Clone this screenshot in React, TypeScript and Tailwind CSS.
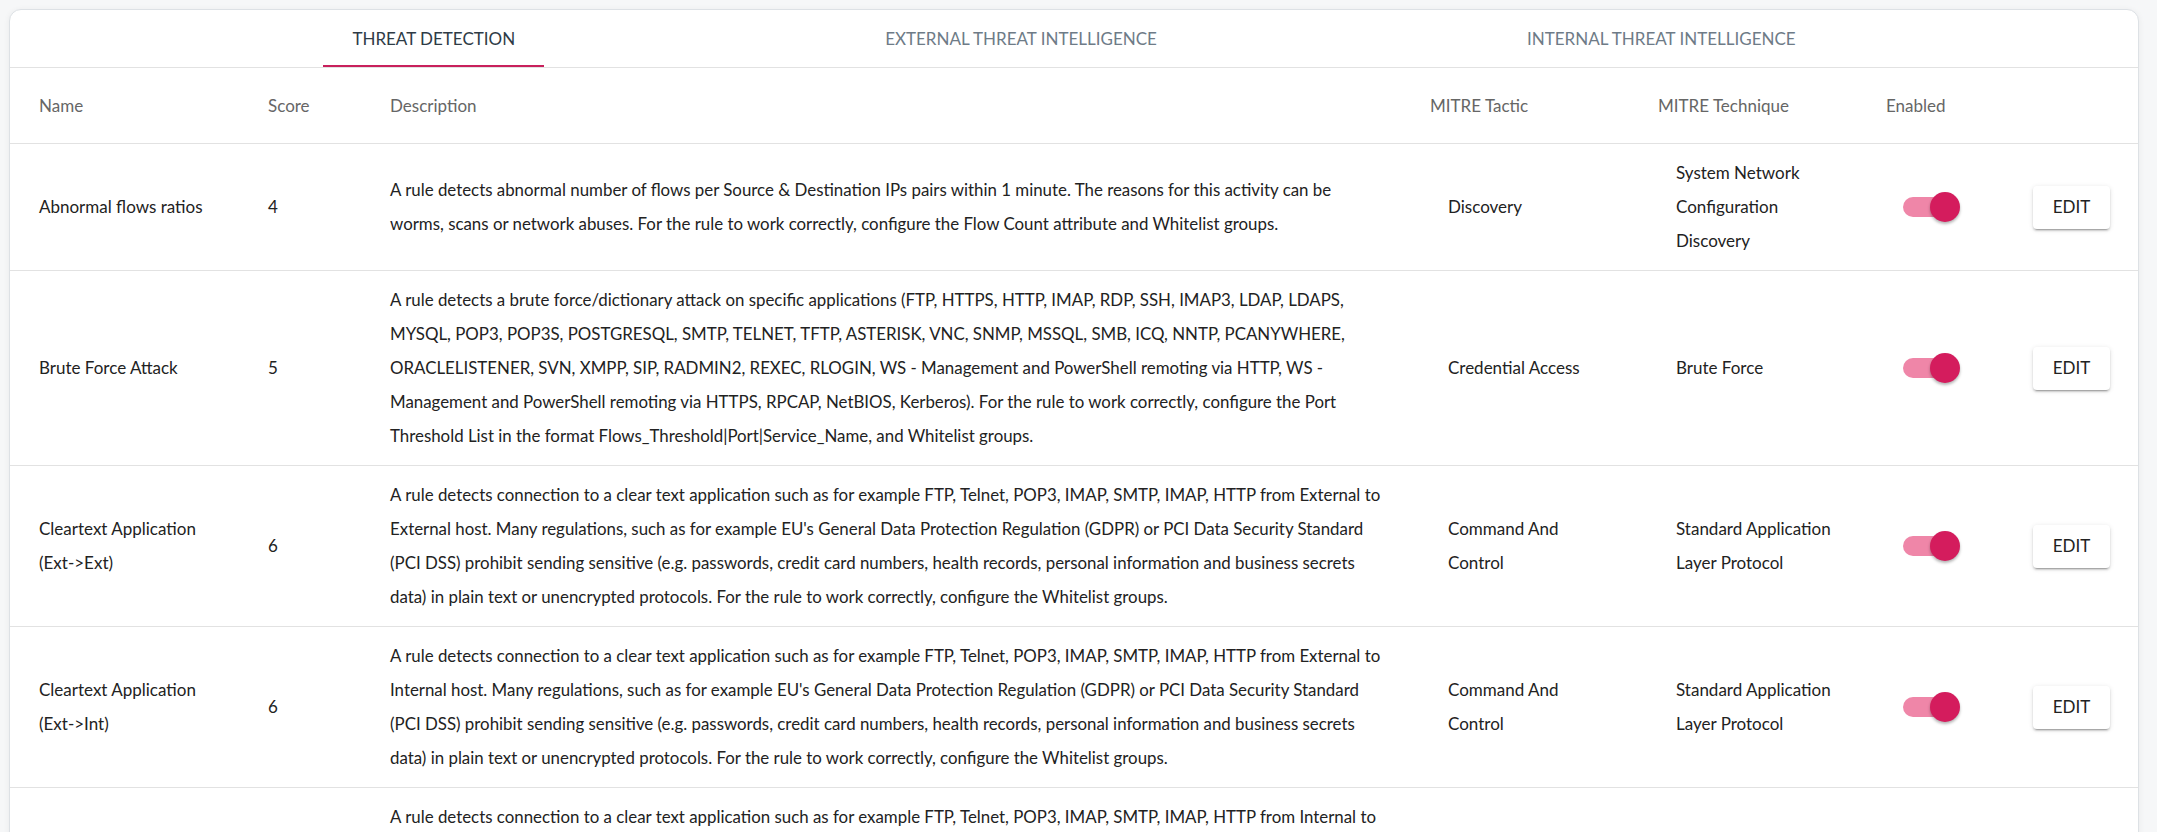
import { useState } from "react";

type Rule = {
  name: string;
  tag: string;
  score: number;
  description: string;
  tactic: string;
  technique: string;
  enabled: boolean;
};

const CLEARTEXT_TAIL =
  "host. Many regulations, such as for example EU's General Data Protection Regulation (GDPR) or PCI Data Security Standard (PCI DSS) prohibit sending sensitive (e.g. passwords, credit card numbers, health records, personal information and business secrets data) in plain text or unencrypted protocols. For the rule to work correctly, configure the Whitelist groups.";

const cleartext = (from: string, to: string) =>
  `A rule detects connection to a clear text application such as for example FTP, Telnet, POP3, IMAP, SMTP, IMAP, HTTP from ${from} to ${to} ${CLEARTEXT_TAIL}`;

const RULES: Rule[] = [
  {
    name: "Abnormal flows ratios",
    tag: "",
    score: 4,
    description:
      "A rule detects abnormal number of flows per Source & Destination IPs pairs within 1 minute. The reasons for this activity can be worms, scans or network abuses. For the rule to work correctly, configure the Flow Count attribute and Whitelist groups.",
    tactic: "Discovery",
    technique: "System Network Configuration Discovery",
    enabled: true,
  },
  {
    name: "Brute Force Attack",
    tag: "",
    score: 5,
    description:
      "A rule detects a brute force/dictionary attack on specific applications (FTP, HTTPS, HTTP, IMAP, RDP, SSH, IMAP3, LDAP, LDAPS, MYSQL, POP3, POP3S, POSTGRESQL, SMTP, TELNET, TFTP, ASTERISK, VNC, SNMP, MSSQL, SMB, ICQ, NNTP, PCANYWHERE, ORACLELISTENER, SVN, XMPP, SIP, RADMIN2, REXEC, RLOGIN, WS - Management and PowerShell remoting via HTTP, WS - Management and PowerShell remoting via HTTPS, RPCAP, NetBIOS, Kerberos). For the rule to work correctly, configure the Port Threshold List in the format Flows_Threshold|Port|Service_Name, and Whitelist groups.",
    tactic: "Credential Access",
    technique: "Brute Force",
    enabled: true,
  },
  {
    name: "Cleartext Application",
    tag: "(Ext->Ext)",
    score: 6,
    description: cleartext("External", "External"),
    tactic: "Command And Control",
    technique: "Standard Application Layer Protocol",
    enabled: true,
  },
  {
    name: "Cleartext Application",
    tag: "(Ext->Int)",
    score: 6,
    description: cleartext("External", "Internal"),
    tactic: "Command And Control",
    technique: "Standard Application Layer Protocol",
    enabled: true,
  },
  {
    name: "Cleartext Application",
    tag: "(Int->Ext)",
    score: 6,
    description: cleartext("Internal", "External"),
    tactic: "Command And Control",
    technique: "Standard Application Layer Protocol",
    enabled: true,
  },
];

const TABS = ["THREAT DETECTION", "EXTERNAL THREAT INTELLIGENCE", "INTERNAL THREAT INTELLIGENCE"];

const GRID = "grid grid-cols-[229px_122px_1040px_228px_228px_147px_1fr] pl-[29px]";

function Toggle({ on, onChange }: { on: boolean; onChange: () => void }) {
  return (
    <button type="button" onClick={onChange} className="relative flex h-[30px] w-[57px] items-center">
      <span
        className={`block h-[20px] w-[52px] rounded-full ${on ? "bg-[#ef86a8]" : "bg-[#bdbdbd]"}`}
      />
      <span
        className={`absolute top-0 h-[30px] w-[30px] rounded-full shadow-[0_2px_3px_rgba(0,0,0,0.3)] ${
          on ? "right-0 bg-[#d41c5d]" : "left-0 bg-[#fafafa]"
        }`}
      />
    </button>
  );
}

export default function App() {
  const [tab, setTab] = useState(0);
  const [enabled, setEnabled] = useState(RULES.map((r) => r.enabled));

  return (
    <div className="min-h-screen bg-[#f6f7f8] pt-[9px] pl-[9px] pr-[18px] font-['Lato',sans-serif] text-[17px] text-[#222]">
      <div className="overflow-hidden rounded-[12px] border border-[#dde1e5] bg-white shadow-[0_1px_6px_rgba(0,0,0,0.06)]">
        {/* Tabs */}
        <div className="flex h-[58px] justify-center gap-[312px] border-b border-[#e2e2e2]">
          {TABS.map((t, i) => (
            <button
              key={t}
              type="button"
              onClick={() => setTab(i)}
              className={`flex items-center border-b-2 px-[29px] pt-[3px] ${
                tab === i ? "border-[#c8205c] text-[#2e3b46]" : "border-transparent text-[#6e7b87]"
              }`}
            >
              {t}
            </button>
          ))}
        </div>

        {/* Header */}
        <div className={`${GRID} h-[76px] items-center border-b border-[#e2e2e2] text-[#666]`}>
          <div>Name</div>
          <div>Score</div>
          <div>Description</div>
          <div>MITRE Tactic</div>
          <div>MITRE Technique</div>
          <div>Enabled</div>
          <div />
        </div>

        {/* Rows */}
        {RULES.map((r, idx) => (
          <div
            key={r.name + r.tag}
            className={`${GRID} items-center border-b border-[#e2e2e2] py-[12px] leading-[34px]`}
          >
            <div className="pr-[30px]">
              {r.name} {r.tag && <span className="whitespace-nowrap">{r.tag}</span>}
            </div>
            <div>{r.score}</div>
            <div className="pr-[43px] text-[16.88px]">{r.description}</div>
            <div className="w-[170px] pl-[18px]">{r.tactic}</div>
            <div className="w-[190px] pl-[18px]">{r.technique}</div>
            <div className="pl-[17px]">
              <Toggle
                on={enabled[idx]}
                onChange={() => setEnabled((e) => e.map((v, j) => (j === idx ? !v : v)))}
              />
            </div>
            <div>
              <button
                type="button"
                className="h-[43px] w-[77px] rounded-[4px] bg-white shadow-[0_3px_1px_-2px_rgba(0,0,0,0.2),0_2px_2px_0_rgba(0,0,0,0.14),0_1px_5px_0_rgba(0,0,0,0.12)]"
              >
                EDIT
              </button>
            </div>
          </div>
        ))}
      </div>
    </div>
  );
}
